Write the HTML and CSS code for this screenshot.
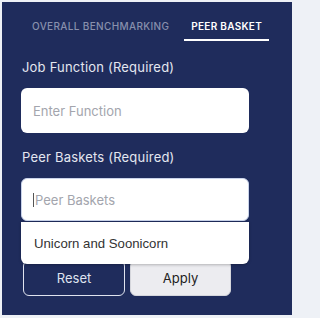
FILE: index.html
```html
<!DOCTYPE html>
<html>
<head>
<meta charset="utf-8">
<link rel="stylesheet" href="styles.css">
</head>
<body>
<div class="panel">
  <div class="tabs">
    <div class="tab">OVERALL BENCHMARKING</div>
    <div class="tab active">PEER BASKET</div>
  </div>
  <div class="label label-first">Job Function (Required)</div>
  <div class="input input-tall"><span class="placeholder">Enter Function</span></div>
  <div class="label">Peer Baskets (Required)</div>
  <div class="field">
    <div class="input input-focus"><span class="caret"></span><span class="placeholder">Peer Baskets</span></div>
    <div class="dropdown"><div class="option">Unicorn and Soonicorn</div></div>
  </div>
  <div class="buttons">
    <button class="btn btn-reset">Reset</button>
    <button class="btn btn-apply">Apply</button>
  </div>
</div>
</body>
</html>
```
FILE: styles.css
```css
html, body {
  margin: 0;
  padding: 0;
}
body {
  background: #eef1f6;
  font-family: Inter, "Noto Sans", "Liberation Sans", sans-serif;
  width: 296px;
  height: 318px;
  overflow: hidden;
}
.panel {
  margin: 2px 4px 0 2px;
  height: 313px;
  background: #1f2c5c;
  padding: 17px 0 0 19px;
  box-sizing: border-box;
}
.tabs {
  display: flex;
  gap: 8px;
  padding-left: 4px;
}
.tab {
  font-size: 10px;
  line-height: 14px;
  letter-spacing: 0.35px;
  color: #8890ad;
  padding: 0 7px 6px;
  border-bottom: 2px solid transparent;
  font-weight: 500;
}
.tab.active {
  color: #ffffff;
  font-weight: 600;
  letter-spacing: 0.3px;
  border-bottom-color: #ffffff;
}
.label {
  font-size: 13px;
  line-height: 16px;
  color: #e4e7f0;
  margin: 16px 0 13px 1px;
  letter-spacing: 0.2px;
}
.label-first {
  margin-top: 18px;
}
.input {
  width: 228px;
  height: 43px;
  background: #ffffff;
  border-radius: 6px;
  display: flex;
  align-items: center;
  padding-left: 12px;
  box-sizing: border-box;
}
.input-tall {
  height: 45px;
}
.input-focus {
  border: 1px solid #c9d3ea;
  padding-left: 11px;
}
.placeholder {
  font-size: 13px;
  color: #a3a5ad;
}
.caret {
  width: 1px;
  height: 14px;
  background: #555;
  margin-right: 1px;
}
.field {
  position: relative;
}
.dropdown {
  position: absolute;
  left: 0;
  top: 44px;
  width: 228px;
  height: 42px;
  background: #ffffff;
  border-radius: 0 0 6px 6px;
  box-shadow: 0 1px 3px rgba(0, 0, 0, 0.25);
  z-index: 2;
  display: flex;
  align-items: center;
}
.option {
  font-family: "Liberation Sans", Arial, sans-serif;
  font-size: 13.2px;
  color: #333333;
  padding-left: 13px;
}
.buttons {
  display: flex;
  gap: 5px;
  margin-top: 39px;
  padding-left: 2px;
}
.btn {
  width: 102px;
  height: 36px;
  border-radius: 6px;
  font-family: inherit;
  font-size: 13px;
  box-sizing: border-box;
}
.btn-reset {
  background: #1f2c5c;
  color: #dfe3ef;
  border: 1.5px solid #dfe3ef;
}
.btn-apply {
  width: 101px;
  background: #ececf0;
  color: #222222;
  border: 1px solid #d5d6dc;
}
```
